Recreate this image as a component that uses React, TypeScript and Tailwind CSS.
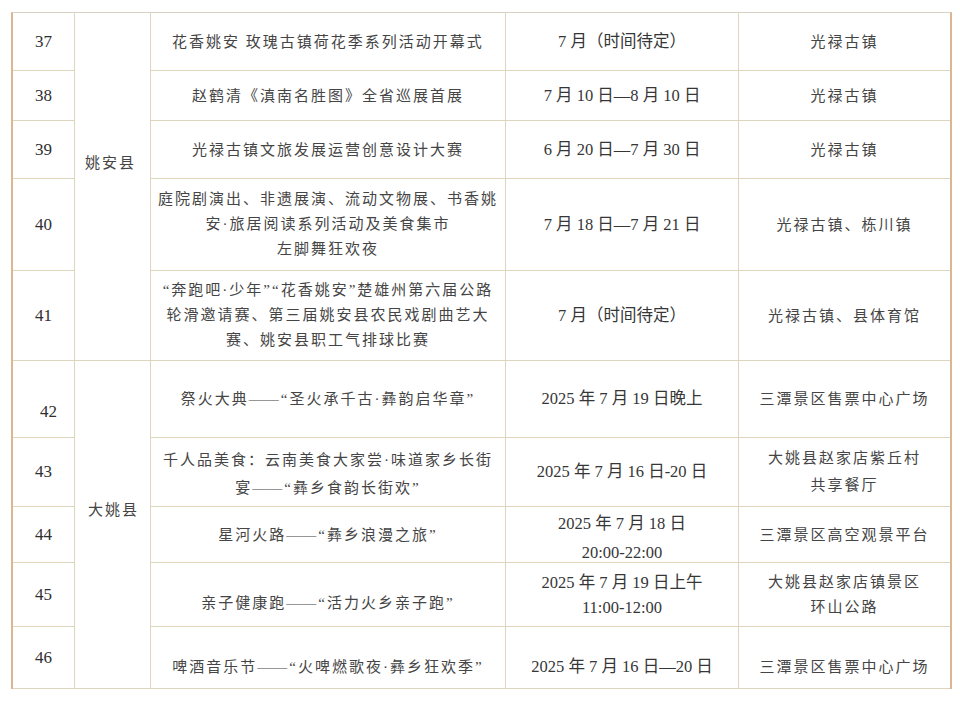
import React from "react";

const B = "border-b border-r border-[#ddd6bd]";
const cjk = "text-[15px] tracking-[2px] text-[#454545]";
const dt = "text-[16.5px] text-[#363636]";

type Row = {
  n: string;
  nCls?: string;
  act: string[];
  actCls?: string;
  actLead?: string;
  date: string[];
  dateCls?: string;
  dateLead?: string;
  place: string[];
  placeCls?: string;
  placeLead?: string;
  group?: { name: string; cls: string };
};

const rows: Row[] = [
  {
    n: "37",
    act: ["花香姚安 玫瑰古镇荷花季系列活动开幕式"],
    actCls: "tracking-[1px]",
    date: ["7 月（时间待定）"],
    place: ["光禄古镇"],
    group: { name: "姚安县", cls: "pt-[140px] pl-[10px]" },
  },
  { n: "38", act: ["赵鹤清《滇南名胜图》全省巡展首展"], date: ["7 月 10 日—8 月 10 日"], place: ["光禄古镇"] },
  { n: "39", act: ["光禄古镇文旅发展运营创意设计大赛"], date: ["6 月 20 日—7 月 30 日"], place: ["光禄古镇"] },
  {
    n: "40",
    act: ["庭院剧演出、非遗展演、流动文物展、书香姚", "安·旅居阅读系列活动及美食集市", "左脚舞狂欢夜"],
    actLead: "leading-[25px]",
    date: ["7 月 18 日—7 月 21 日"],
    place: ["光禄古镇、栋川镇"],
  },
  {
    n: "41",
    act: ["“奔跑吧·少年”“花香姚安”楚雄州第六届公路", "轮滑邀请赛、第三届姚安县农民戏剧曲艺大", "赛、姚安县职工气排球比赛"],
    actLead: "leading-[25px]",
    date: ["7 月（时间待定）"],
    place: ["光禄古镇、县体育馆"],
  },
  {
    n: "42",
    nCls: "pt-[26px] pl-[10px]",
    act: ["祭火大典——“圣火承千古·彝韵启华章”"],
    date: ["2025 年 7 月 19 日晚上"],
    place: ["三潭景区售票中心广场"],
    group: { name: "大姚县", cls: "pt-[139px] pl-[13px]" },
  },
  {
    n: "43",
    act: ["千人品美食：云南美食大家尝·味道家乡长街", "宴——“彝乡食韵长街欢”"],
    actLead: "leading-[28px]",
    actCls: "pt-[4px]",
    date: ["2025 年 7 月 16 日-20 日"],
    place: ["大姚县赵家店紫丘村", "共享餐厅"],
    placeLead: "leading-[27px]",
  },
  {
    n: "44",
    act: ["星河火路——“彝乡浪漫之旅”"],
    date: ["2025 年 7 月 18 日", "20:00-22:00"],
    dateLead: "leading-[29px]",
    dateCls: "pt-[6px]",
    place: ["三潭景区高空观景平台"],
  },
  {
    n: "45",
    act: ["亲子健康跑——“活力火乡亲子跑”"],
    actCls: "pt-[16px]",
    date: ["2025 年 7 月 19 日上午", "11:00-12:00"],
    dateLead: "leading-[25px]",
    place: ["大姚县赵家店镇景区", "环山公路"],
    placeLead: "leading-[25px]",
  },
  {
    n: "46",
    act: ["啤酒音乐节——“火啤燃歌夜·彝乡狂欢季”"],
    actCls: "pt-[18px]",
    date: ["2025 年 7 月 16 日—20 日"],
    dateCls: "pt-[18px]",
    place: ["三潭景区售票中心广场"],
    placeCls: "pt-[18px]",
  },
];

function Text({ s }: { s: string }) {
  const parts = s.split("——");
  if (parts.length === 1) return <>{s}</>;
  return (
    <>
      {parts[0]}
      <span className="tracking-[0px] mr-[2px]">——</span>
      {parts[1]}
    </>
  );
}

function Lines({ lines, lead }: { lines: string[]; lead?: string }) {
  return (
    <div className={`flex flex-col items-center ${lead ?? "leading-[22px]"}`}>
      {lines.map((l, i) => (
        <span key={i} className="whitespace-nowrap">
          <Text s={l} />
        </span>
      ))}
    </div>
  );
}

export default function App() {
  return (
    <div className="w-[960px] h-[704px] bg-white font-['Liberation_Serif','Noto_Sans_CJK_SC',serif] overflow-hidden">
      <div className="ml-[11px] mt-[12px] w-[941px] border-t border-t-[#d9d2c2] border-l-2 border-l-[#dcb690] border-r-2 border-r-[#dcb690] grid grid-cols-[62px_76px_355px_233px_211px] grid-rows-[58px_50px_58px_92px_90px_77px_69px_56px_64px_62px]">
        {rows.map((r) => (
          <React.Fragment key={r.n}>
            <div className={`${B} flex items-center justify-center text-[17px] text-[#2f2f2f] ${r.nCls ?? ""}`}>
              {r.n}
            </div>
            {r.group && (
              <div className={`${B} row-span-5 flex items-start ${cjk} leading-[20px] ${r.group.cls}`}>
                {r.group.name}
              </div>
            )}
            <div className={`${B} flex items-center justify-center ${cjk} ${r.actCls ?? ""}`}>
              <Lines lines={r.act} lead={r.actLead} />
            </div>
            <div className={`${B} flex items-center justify-center ${dt} ${r.dateCls ?? ""}`}>
              <Lines lines={r.date} lead={r.dateLead} />
            </div>
            <div className={`border-b border-[#ddd6bd] flex items-center justify-center ${cjk} ${r.placeCls ?? ""}`}>
              <Lines lines={r.place} lead={r.placeLead} />
            </div>
          </React.Fragment>
        ))}
      </div>
    </div>
  );
}
